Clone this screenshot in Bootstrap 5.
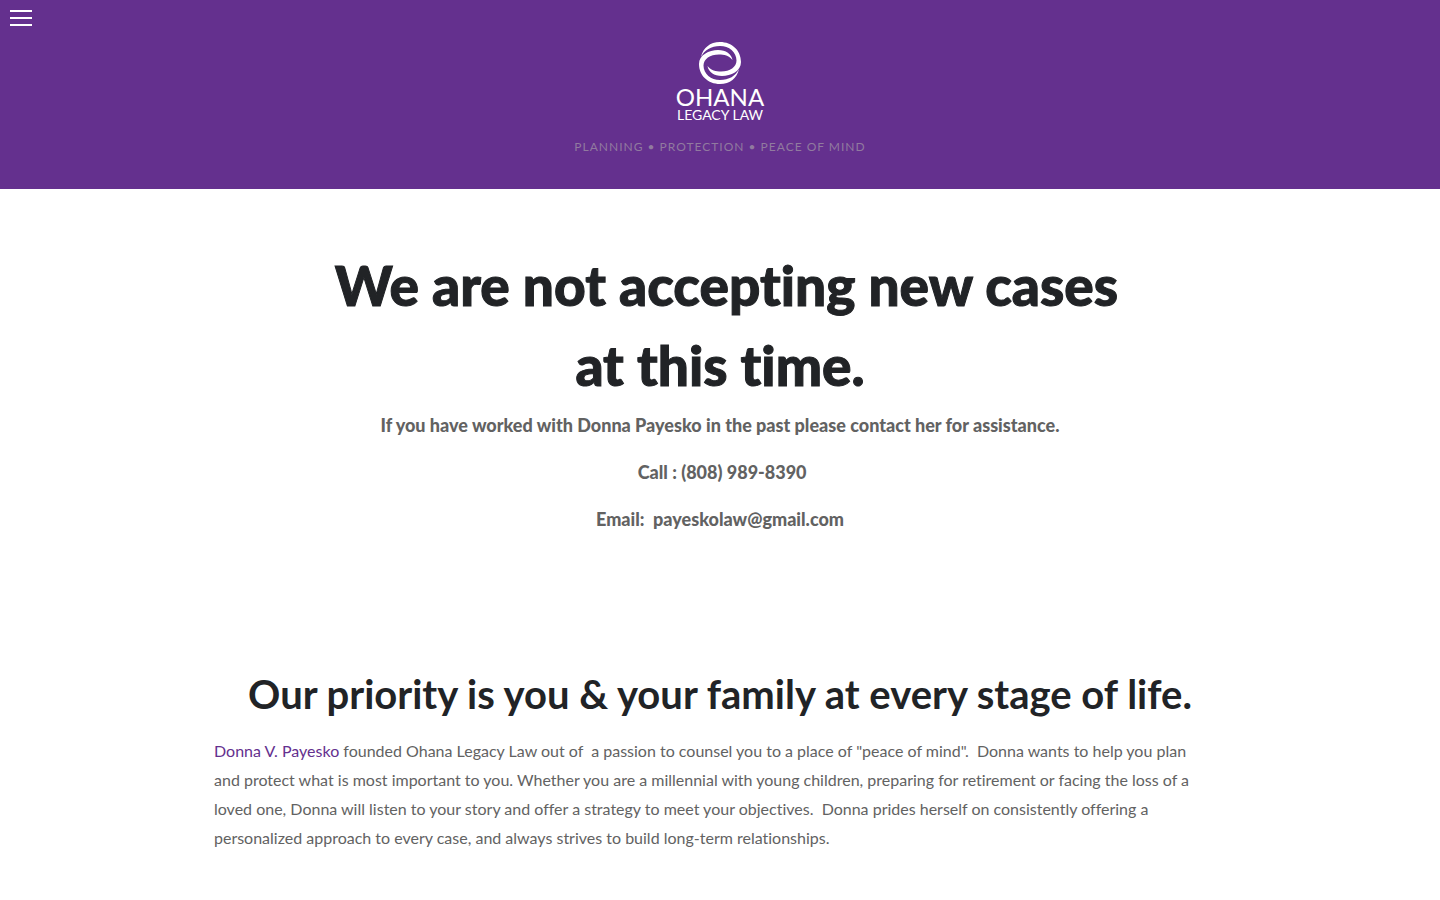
<!DOCTYPE html>
<html lang="en">
<head>
<meta charset="utf-8">
<meta name="viewport" content="width=device-width, initial-scale=1">
<title>Ohana Legacy Law</title>
<link href="https://cdn.jsdelivr.net/npm/bootstrap@5.3.0/dist/css/bootstrap.min.css" rel="stylesheet">
<style>
  html { scrollbar-width: none; }
  body { font-family: Lato, "Open Sans", sans-serif; font-variant-ligatures: none; color: #626262; font-size: 16px; line-height: 29px; }
  .site-header { background: #64308e; padding: 40px 0 32px; }
  .menu-btn { width: 42px; height: 36px; }
  .brand-name { font-size: 24px; line-height: 22px; }
  .brand-sub { font-size: 14px; line-height: 14px; }
  .tagline { font-size: 12px; line-height: 20px; letter-spacing: 1px; color: #917a9f; margin-top: 15px; }
  .content { max-width: 1036px; }
  h1, h2, h3 { color: #212326; margin: 0; }
  h1 { font-size: 55px; font-weight: 900; line-height: 80px; max-width: 840px; -webkit-text-stroke: 1px #212326; }
  h2 { font-size: 40px; font-weight: 700; line-height: 60px; }
  h3 { font-size: 28px; font-weight: 700; line-height: 42px; }
  .notice { padding-top: 56px; }
  .notice h1 { margin-bottom: 6px; }
  .notice p { font-size: 18px; font-weight: 900; line-height: 29px; margin-bottom: 18px; }
  .about { padding-top: 112px; }
  .about p { margin: 12px 0 37px; }
  .about a { color: #64308e; }
</style>
</head>
<body>
<header class="site-header position-relative text-center text-white">
  <button class="menu-btn btn p-0 border-0 position-absolute top-0 start-0" type="button" aria-label="Menu">
    <svg class="d-block" width="42" height="36" stroke="#fff" stroke-width="2" aria-hidden="true"><path d="M10 11h22M10 18h22M10 25h22"/></svg>
  </button>
  <a class="d-inline-flex flex-column align-items-center text-white text-decoration-none" href="#">
    <svg width="46" height="46" viewBox="0 0 46 46" fill="#fff" aria-hidden="true">
      <path id="swirl" d="M4 17C6 8 13 2 23 2C35 2 44 10.500 44 22C44 31 34 36 25 36C17 36 11.500 32 10.500 26C14 30.500 19 31.500 24 31.500C33 31.500 39.500 27 39.500 20.500C39.500 12 32 6 23 6C14 6 7.500 10 4 17Z"/>
      <use href="#swirl" transform="rotate(180 23 23)"/>
    </svg>
    <span class="brand-name">OHANA</span>
    <span class="brand-sub">LEGACY LAW</span>
  </a>
  <div class="tagline">PLANNING • PROTECTION • PEACE OF MIND</div>
</header>
<main class="content container">
  <section class="notice text-center">
    <h1 class="mx-auto">&nbsp;We are not accepting new cases at this time.</h1>
    <p>If you have worked with Donna Payesko in the past please contact her for assistance.</p>
    <p>&nbsp;Call : (808) 989-8390</p>
    <p>Email: &nbsp;payeskolaw@gmail.com</p>
  </section>
  <section class="about">
    <h2 class="text-center">Our priority is you &amp; your family at every stage of life.</h2>
    <p><a class="text-decoration-none" href="#">Donna V. Payesko</a> founded Ohana Legacy Law out of &nbsp;a passion to counsel you to a place of "peace of mind". &nbsp;Donna wants to help you plan <br class="d-none d-lg-inline">and protect what is most important to you. Whether you are a millennial with young children, preparing for retirement or facing the loss of a <br class="d-none d-lg-inline">loved one, Donna will listen to your story and offer a strategy to meet your objectives. &nbsp;Donna prides herself on consistently offering a <br class="d-none d-lg-inline">personalized approach to every case, and always strives to build long-term relationships.</p>
    <h3 class="text-center">Whether you are planning for retirement or facing the loss of a loved one</h3>
  </section>
</main>
<script src="https://cdn.jsdelivr.net/npm/bootstrap@5.3.0/dist/js/bootstrap.bundle.min.js"></script>
</body>
</html>
